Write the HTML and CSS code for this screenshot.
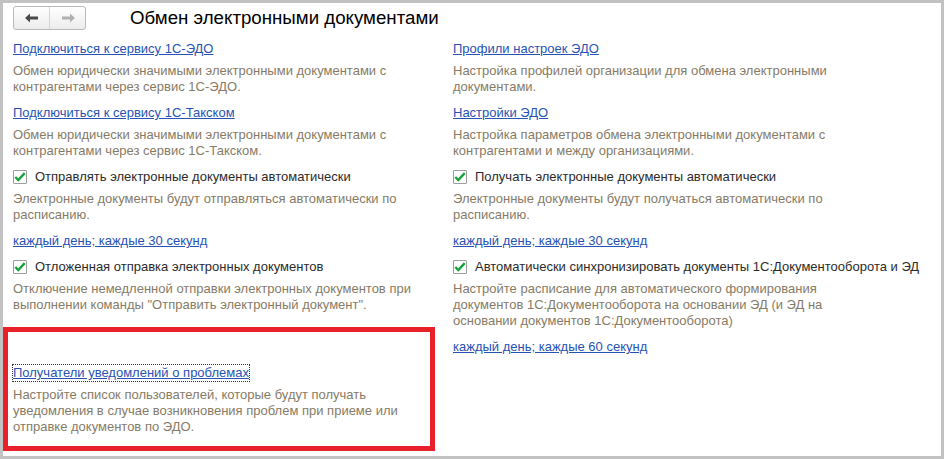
FILE: index.html
```html
<!DOCTYPE html>
<html lang="ru">
<head>
    <meta charset="UTF-8">
    <title>Обмен электронными документами</title>
    <link rel="stylesheet" href="styles.css">
</head>
<body>
    <div class="window">
        <div class="header">
            <div class="nav">
                <button class="nav-btn">
                    <svg width="14" height="10" viewBox="0 0 14 10"><path d="M0 5 L5 0.5 L5 3.5 L13 3.5 L13 6.5 L5 6.5 L5 9.5 Z" fill="#4a4a4a"/></svg>
                </button>
                <button class="nav-btn">
                    <svg width="14" height="10" viewBox="0 0 14 10"><path d="M14 5 L9 0.5 L9 3.5 L1 3.5 L1 6.5 L9 6.5 L9 9.5 Z" fill="#b0b0b0"/></svg>
                </button>
            </div>
            <h1 class="title">Обмен электронными документами</h1>
        </div>

        <div class="columns">
            <div class="column">
                <a class="link head" href="#">Подключиться к сервису 1С-ЭДО</a>
                <p class="desc">Обмен юридически значимыми электронными документами с контрагентами через сервис 1С-ЭДО.</p>

                <a class="link head" href="#">Подключиться к сервису 1С-Такском</a>
                <p class="desc">Обмен юридически значимыми электронными документами с контрагентами через сервис 1С-Такском.</p>

                <label class="check head"><span class="box"><svg width="14" height="12" viewBox="0 0 14 12"><path d="M1.5 6 L5 9.5 L12.5 1.5" fill="none" stroke="#16a33c" stroke-width="2.8"/></svg></span>Отправлять электронные документы автоматически</label>
                <p class="desc">Электронные документы будут отправляться автоматически по расписанию.</p>
                <a class="link sched" href="#">каждый день; каждые 30 секунд</a>

                <label class="check head"><span class="box"><svg width="14" height="12" viewBox="0 0 14 12"><path d="M1.5 6 L5 9.5 L12.5 1.5" fill="none" stroke="#16a33c" stroke-width="2.8"/></svg></span>Отложенная отправка электронных документов</label>
                <p class="desc">Отключение немедленной отправки электронных документов при выполнении команды "Отправить электронный документ".</p>

                <div class="marked">
                    <a class="link head focused" href="#">Получатели уведомлений о проблемах</a>
                    <p class="desc">Настройте список пользователей, которые будут получать уведомления в случае возникновения проблем при приеме или отправке документов по ЭДО.</p>
                </div>
            </div>

            <div class="column">
                <a class="link head" href="#">Профили настроек ЭДО</a>
                <p class="desc">Настройка профилей организации для обмена электронными документами.</p>

                <a class="link head" href="#">Настройки ЭДО</a>
                <p class="desc">Настройка параметров обмена электронными документами с контрагентами и между организациями.</p>

                <label class="check head"><span class="box"><svg width="14" height="12" viewBox="0 0 14 12"><path d="M1.5 6 L5 9.5 L12.5 1.5" fill="none" stroke="#16a33c" stroke-width="2.8"/></svg></span>Получать электронные документы автоматически</label>
                <p class="desc">Электронные документы будут получаться автоматически по расписанию.</p>
                <a class="link sched" href="#">каждый день; каждые 30 секунд</a>

                <label class="check head"><span class="box"><svg width="14" height="12" viewBox="0 0 14 12"><path d="M1.5 6 L5 9.5 L12.5 1.5" fill="none" stroke="#16a33c" stroke-width="2.8"/></svg></span>Автоматически синхронизировать документы 1С:Документооборота и ЭД</label>
                <p class="desc">Настройте расписание для автоматического формирования документов 1С:Документооборота на основании ЭД (и ЭД на основании документов 1С:Документооборота)</p>
                <a class="link sched" href="#">каждый день; каждые 60 секунд</a>
            </div>
        </div>
    </div>
</body>
</html>
```

FILE: styles.css
```css
* {
    margin: 0;
    padding: 0;
    box-sizing: border-box;
}

body {
    background: #fff;
    font-family: "Liberation Sans", Arial, sans-serif;
    font-size: 13px;
    color: #333;
}

.window {
    width: 944px;
    height: 459px;
    border: 3px solid #c2c2c2;
    background: #fff;
    padding: 3px 10px 0 10px;
}

.header {
    display: flex;
    align-items: center;
    height: 24px;
    margin-bottom: 11px;
}

.nav {
    display: flex;
    width: 73px;
    height: 24px;
    border: 1px solid #b9b9b9;
    border-radius: 3px;
    background: linear-gradient(#ffffff, #ececec);
    overflow: hidden;
}

.nav-btn {
    flex: 1;
    border: none;
    background: transparent;
    display: flex;
    justify-content: center;
    align-items: center;
}

.nav-btn + .nav-btn {
    border-left: 1px solid #d4d4d4;
}

.title {
    margin-left: 44px;
    font-size: 18.7px;
    font-weight: normal;
    color: #000;
    line-height: 24px;
}

.columns {
    display: grid;
    grid-template-columns: 440px 1fr;
}

.column {
    display: flex;
    flex-direction: column;
    align-items: flex-start;
}

.link {
    color: #2752b5;
    text-decoration: underline;
    line-height: 16px;
}

.head {
    margin-bottom: 6px;
}

.sched {
    margin-bottom: 10px;
}

.desc {
    color: #867b66;
    line-height: 16px;
    width: 400px;
    margin-bottom: 10px;
}

.check {
    display: flex;
    align-items: center;
    line-height: 16px;
    color: #2b2b2b;
}

.box {
    width: 14px;
    height: 14px;
    border: 1px solid #9c9c9c;
    border-radius: 1px;
    background: #fff;
    margin-right: 8px;
    display: flex;
    align-items: center;
    justify-content: center;
}

.box svg {
    margin-top: -1px;
}

.marked {
    margin-left: -10px;
    margin-top: 4px;
    width: 432px;
    border: 5px solid #e8202a;
    padding: 33px 5px 0 5px;
    height: 124px;
}

.focused {
    outline: 1px dotted #333;
    display: inline-block;
}
```
